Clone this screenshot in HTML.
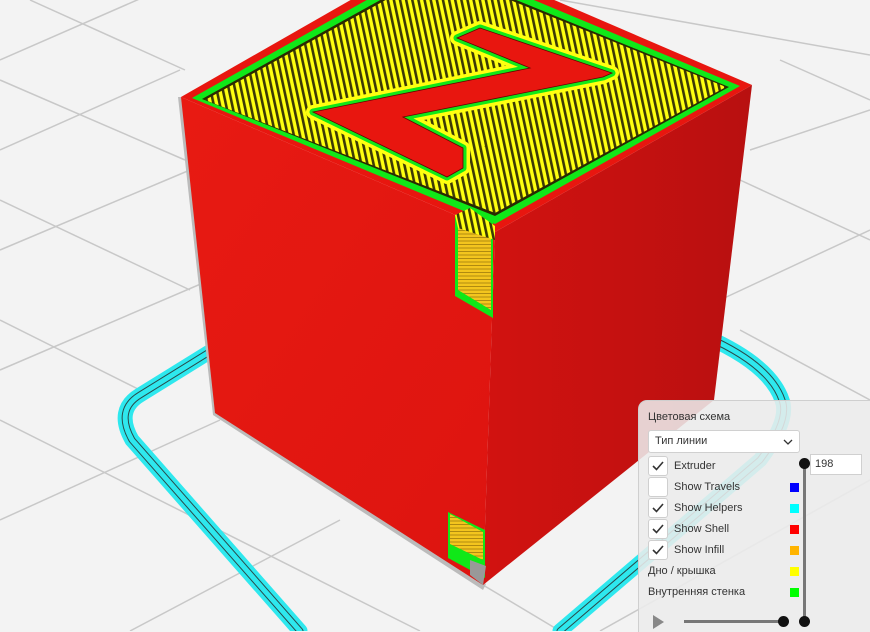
<!DOCTYPE html>
<html><head><meta charset="utf-8">
<style>
html,body{margin:0;padding:0;width:870px;height:631px;overflow:hidden;background:#f3f3f3;font-family:"Liberation Sans","Noto Sans CJK SC",sans-serif;}
#panel{position:absolute;left:638px;top:400px;width:232px;height:231px;background:rgba(236,236,236,0.88);border-left:1px solid #cfcfcf;border-top:1px solid #cfcfcf;border-top-left-radius:9px;font-size:11px;color:#333;}
.t{position:absolute;white-space:nowrap;}
.cb{position:absolute;left:9px;width:18px;height:18px;background:#fff;border:1px solid #cfcfcf;border-radius:3px;}
.cb svg{position:absolute;left:3px;top:4px;}
.sw{position:absolute;left:151px;width:9px;height:9px;}
</style></head><body>
<svg width="870" height="631" style="position:absolute;left:0;top:0">
<defs>
<pattern id="hatch" width="6" height="10" patternUnits="userSpaceOnUse" patternTransform="rotate(-12)">
<rect width="6" height="10" fill="#ffff10"/><rect x="0" width="2.6" height="10" fill="#3c3a05"/>
</pattern>
<pattern id="hz" width="10" height="3.5" patternUnits="userSpaceOnUse">
<rect width="10" height="3.5" fill="#f3c51e"/><rect y="2.5" width="10" height="1" fill="#b08a10"/>
</pattern>
<linearGradient id="lf" x1="0" y1="0" x2="1" y2="1"><stop offset="0" stop-color="#e81a12"/><stop offset="1" stop-color="#dd1410"/></linearGradient>
<linearGradient id="rf" x1="0" y1="0" x2="1" y2="0"><stop offset="0" stop-color="#d21210"/><stop offset="1" stop-color="#b81010"/></linearGradient>
</defs>
<g stroke="#c8c8c8" stroke-width="1.5" fill="none">
<line x1="0" y1="60" x2="240" y2="-45"/><line x1="0" y1="150" x2="180" y2="70"/>
<line x1="0" y1="250" x2="190" y2="170"/><line x1="0" y1="370" x2="210" y2="280"/>
<line x1="0" y1="520" x2="220" y2="420"/><line x1="130" y1="631" x2="340" y2="520"/>
<line x1="600" y1="631" x2="870" y2="480"/>
<line x1="750" y1="150" x2="870" y2="110"/><line x1="720" y1="300" x2="870" y2="230"/>
<line x1="740" y1="330" x2="870" y2="400"/><line x1="740" y1="180" x2="870" y2="240"/>
<line x1="780" y1="60" x2="870" y2="100"/><line x1="560" y1="0" x2="870" y2="55"/>
<line x1="0" y1="200" x2="190" y2="290"/><line x1="0" y1="320" x2="140" y2="390"/>
<line x1="0" y1="420" x2="420" y2="631"/><line x1="0" y1="80" x2="185" y2="160"/>
<line x1="30" y1="0" x2="185" y2="70"/><line x1="483" y1="585" x2="560" y2="631"/>
</g>
<g fill="none" stroke-linecap="round">
<path d="M232 338 L140 395 Q115 410 132 440 L300 631" stroke="#2ee8ee" stroke-width="15"/>
<path d="M232 338 L140 395 Q115 410 132 440 L300 631" stroke="#2a4a4a" stroke-width="7"/>
<path d="M232 338 L140 395 Q115 410 132 440 L300 631" stroke="#2ee8ee" stroke-width="5"/>
<path d="M707 337 Q770 365 782 400 Q790 420 760 460 L560 631" stroke="#2ee8ee" stroke-width="15"/>
<path d="M707 337 Q770 365 782 400 Q790 420 760 460 L560 631" stroke="#2a4a4a" stroke-width="7"/>
<path d="M707 337 Q770 365 782 400 Q790 420 760 460 L560 631" stroke="#2ee8ee" stroke-width="5"/>
</g>
<polygon points="178,97 213,415 483,590 486,584 216,411 183,97" fill="#bbb"/>
<polygon points="181,97 495,232 483,585 215,413" fill="url(#lf)"/>
<polygon points="495,232 752,85 714,400 483,585" fill="url(#rf)"/>
<polygon points="181,97 438,-50 752,85 495,232" fill="#e8160f"/>
<polygon points="192,98 438,-40 740,86 495,224" fill="#10e818"/>
<polygon points="202,99 438,-32 729,87 495,216" fill="#2a2a00"/>
<polygon points="205,100 438,-29 726,87 495,213" fill="url(#hatch)"/>
<polygon points="457,38 480,28 612,73 603,77 403,117 463,148 463,168 447,177 313,112 530,68" fill="#ffff10" stroke="#ffff10" stroke-width="14" stroke-linejoin="round"/>
<polygon points="457,38 480,28 612,73 603,77 403,117 463,148 463,168 447,177 313,112 530,68" fill="none" stroke="#10e818" stroke-width="7" stroke-linejoin="round"/>
<polygon points="457,38 480,28 612,73 603,77 403,117 463,148 463,168 447,177 313,112 530,68" fill="#e8160f" stroke="#600" stroke-width="0.8"/>
<polygon points="455,215 493,222 493,318 455,296" fill="#10e818"/>
<polygon points="458,218 491,226 491,310 458,290" fill="url(#hz)"/>
<polygon points="455,215 470,208 495,226 495,240 458,228" fill="url(#hatch)"/>
<polygon points="448,512 485,530 485,578 448,558" fill="#10e818"/>
<polygon points="450,514 483,532 483,560 450,544" fill="url(#hz)"/>
<polygon points="470,560 486,566 483,585 470,575" fill="#999"/>
</svg>
<div id="panel">
<div class="t" style="left:9px;top:10px;">Цветовая схема</div>
<div style="position:absolute;left:9px;top:29px;width:150px;height:21px;background:#fff;border:1px solid #d0d0d0;border-radius:3px;"><span class="t" style="left:6px;top:4px;">Тип линии</span>
<svg width="10" height="6" style="position:absolute;right:6px;top:8px"><path d="M1 1 L5 5 L9 1" stroke="#333" stroke-width="1.3" fill="none"/></svg></div>
<div class="cb" style="top:55px"><svg width="12" height="10"><path d="M1 5 L4.5 8.5 L11 1" stroke="#333" stroke-width="1.6" fill="none"/></svg></div>
<div class="t" style="left:35px;top:59px">Extruder</div>
<div class="cb" style="top:76px"></div>
<div class="t" style="left:35px;top:80px">Show Travels</div><div class="sw" style="top:82px;background:#0000ff"></div>
<div class="cb" style="top:97px"><svg width="12" height="10"><path d="M1 5 L4.5 8.5 L11 1" stroke="#333" stroke-width="1.6" fill="none"/></svg></div>
<div class="t" style="left:35px;top:101px">Show Helpers</div><div class="sw" style="top:103px;background:#00ffff"></div>
<div class="cb" style="top:118px"><svg width="12" height="10"><path d="M1 5 L4.5 8.5 L11 1" stroke="#333" stroke-width="1.6" fill="none"/></svg></div>
<div class="t" style="left:35px;top:122px">Show Shell</div><div class="sw" style="top:124px;background:#ff0000"></div>
<div class="cb" style="top:139px"><svg width="12" height="10"><path d="M1 5 L4.5 8.5 L11 1" stroke="#333" stroke-width="1.6" fill="none"/></svg></div>
<div class="t" style="left:35px;top:143px">Show Infill</div><div class="sw" style="top:145px;background:#ffb400"></div>
<div class="t" style="left:9px;top:164px">Дно / крышка</div><div class="sw" style="top:166px;background:#ffff00"></div>
<div class="t" style="left:9px;top:185px">Внутренняя стенка</div><div class="sw" style="top:187px;background:#00ff00"></div>
<div style="position:absolute;left:171px;top:53px;width:50px;height:19px;background:#fff;border:1px solid #d0d0d0;"><span class="t" style="left:4px;top:3px">198</span></div>
<div style="position:absolute;left:164px;top:63px;width:3px;height:158px;background:#777"></div>
<div style="position:absolute;left:160px;top:57px;width:11px;height:11px;border-radius:50%;background:#111"></div>
<div style="position:absolute;left:160px;top:215px;width:11px;height:11px;border-radius:50%;background:#111"></div>
<div style="position:absolute;left:45px;top:219px;width:100px;height:3px;background:#777"></div>
<div style="position:absolute;left:139px;top:215px;width:11px;height:11px;border-radius:50%;background:#111"></div>
<svg width="12" height="14" style="position:absolute;left:14px;top:214px"><path d="M0 0 L11 7 L0 14Z" fill="#888"/></svg>
</div>
</body></html>
